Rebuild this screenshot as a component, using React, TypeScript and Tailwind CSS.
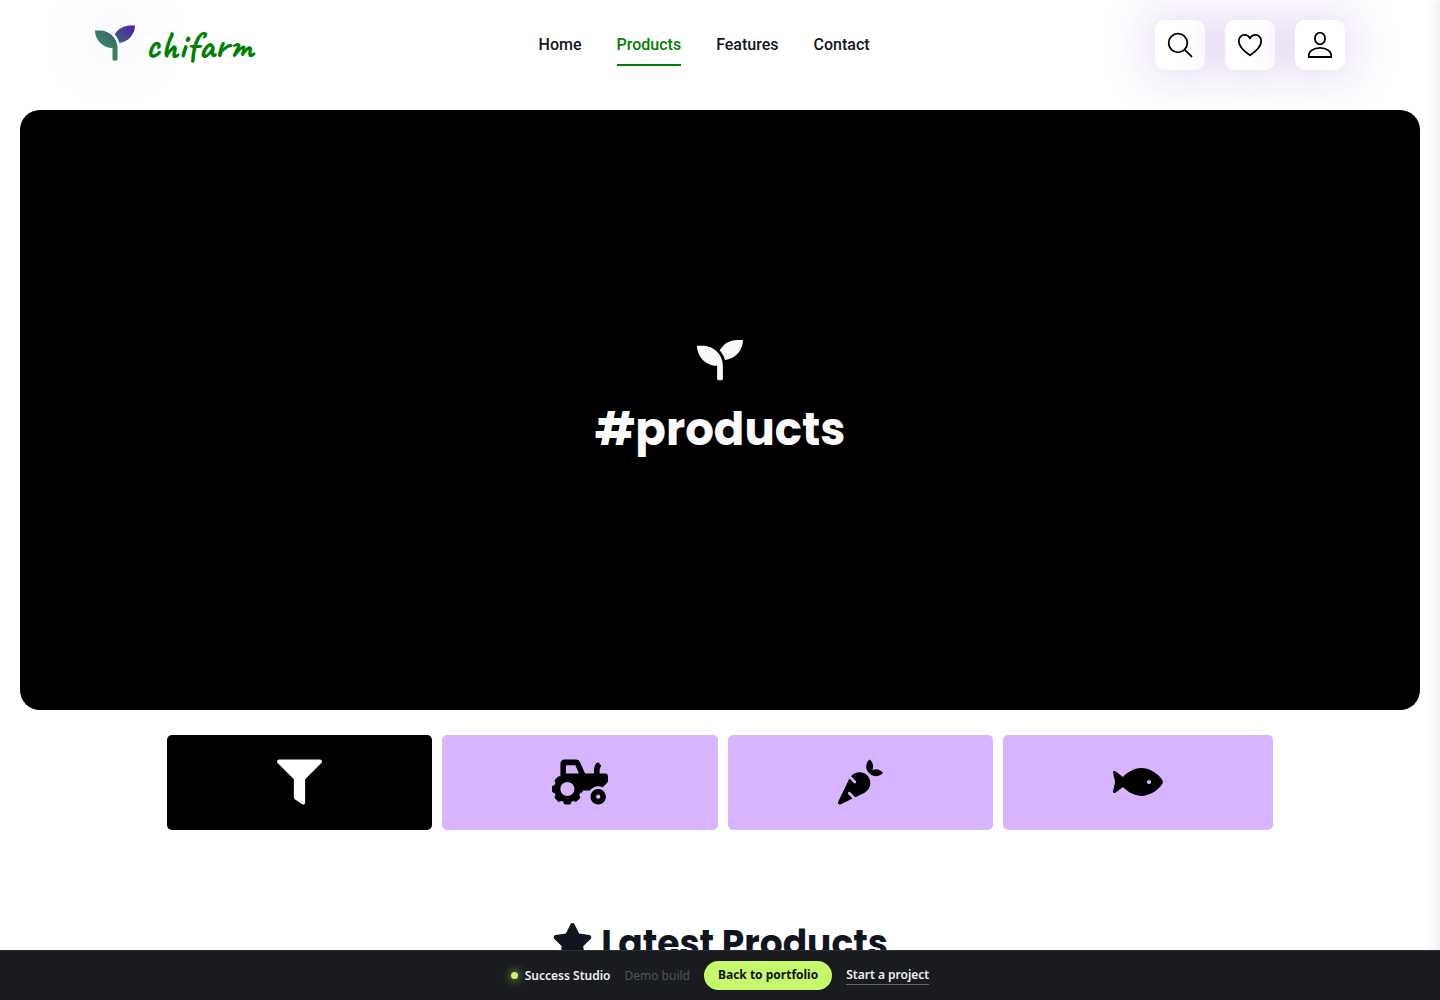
import { FaCarrot, FaFilter, FaFish, FaSeedling, FaStar, FaTractor } from "react-icons/fa";

const navLinks = ["Home", "Products", "Features", "Contact"];

const filters = [
  { label: "All products", icon: FaFilter, size: "w-[45px]", style: "bg-black text-white" },
  { label: "Machinery", icon: FaTractor, size: "w-[56px]", style: "bg-[#d6b4ff] text-black" },
  { label: "Vegetables", icon: FaCarrot, size: "w-[45px]", style: "bg-[#d6b4ff] text-black" },
  { label: "Fish", icon: FaFish, size: "w-[50px]", style: "bg-[#d6b4ff] text-black" },
];

const actions = [
  {
    label: "Search",
    icon: (
      <>
        <circle cx="11" cy="11" r="9.3" />
        <path d="M17.8 17.8 L24.5 24.3" />
      </>
    ),
  },
  {
    label: "Wishlist",
    icon: (
      <path d="M13 23.3 C10 21.300 1.800 15.500 1.800 9 C1.800 5.300 4.400 2.800 7.400 2.800 C9.900 2.800 12 4.300 13 6.400 C14 4.300 16.100 2.800 18.600 2.800 C21.600 2.800 24.200 5.300 24.200 9 C24.200 15.500 16 21.300 13 23.300 Z" />
    ),
  },
  {
    label: "Account",
    icon: (
      <>
        <ellipse cx="13" cy="6.5" rx="5.100" ry="5.800" />
        <path d="M1.800 25 C1 19.500 6.500 15.800 13 15.800 C19.500 15.800 25 19.500 24.200 25 Z" />
      </>
    ),
  },
];

const Header = () => {
  return (
    <header className="flex h-[90px] items-center justify-between px-[95px]">
      <a href="#home" className="flex items-center gap-[10px] pb-1 text-[#008000]">
        <svg
          viewBox="0 0 512 512"
          className="h-10 w-10 drop-shadow-[0_0_30px_rgba(80,40,240,0.2)]"
          aria-hidden="true"
        >
          <defs>
            <linearGradient id="leaf" x1="0" y1="1" x2="1" y2="0">
              <stop offset="0.4" stopColor="#368060" />
              <stop offset="1" stopColor="#5a12b8" />
            </linearGradient>
          </defs>
          <path
            fill="url(#leaf)"
            d="M64 96H0c0 123.700 100.300 224 224 224v144c0 8.800 7.200 16 16 16h32c8.800 0 16-7.200 16-16V320C288 196.300 187.700 96 64 96zm384-64c-84.200 0-157.400 46.500-195.700 115.200 27.700 30.200 48.200 66.900 59 107.600C424 243.100 512 147.900 512 32h-64z"
          />
        </svg>
        <span className="pt-1 text-[40px] leading-10 font-bold font-[Caveat,cursive]">chifarm</span>
      </a>
      <nav className="flex gap-[35px]">
        {navLinks.map((link) => (
          <a
            key={link}
            href={`#${link.toLowerCase()}`}
            className={`border-b-2 pt-2 pb-1.5 leading-[26px] font-medium ${
              link === "Products"
                ? "border-[#008000] text-[#008000]"
                : "border-transparent text-[#10151f]"
            }`}
          >
            {link}
          </a>
        ))}
      </nav>
      <div className="flex gap-5">
        {actions.map(({ label, icon }) => (
          <button
            key={label}
            type="button"
            aria-label={label}
            className="flex h-[50px] w-[50px] items-center justify-center rounded-[10px] bg-white shadow-[0_0_50px_rgba(90,20,180,0.25)]"
          >
            <svg
              viewBox="0 0 26 26"
              className="h-[26px] w-[26px]"
              fill="none"
              stroke="#000"
              strokeWidth="1.8"
              strokeLinejoin="round"
              strokeLinecap="round"
            >
              {icon}
            </svg>
          </button>
        ))}
      </div>
    </header>
  );
};

const StudioBar = () => {
  return (
    <footer className="fixed inset-x-0 bottom-0 flex h-[50px] items-center justify-center gap-[14px] border-t border-[#2e2f34] bg-[#1a1b1f] text-xs leading-5 font-['Segoe_UI','Noto_Sans',sans-serif]">
      <p className="flex items-center gap-[7px] font-semibold text-[#f0f0f2]">
        <span className="h-[7px] w-[7px] rounded-full bg-[#c5f96b] shadow-[0_0_10px_#c5f96b]" />
        Success Studio
      </p>
      <span className="text-[#50535b]">Demo build</span>
      <a
        href="#portfolio"
        className="rounded-full bg-[#c5f96b] px-[14px] pt-1 pb-[5px] font-bold text-[#101216]"
      >
        Back to portfolio
      </a>
      <a href="#project" className="border-b border-[#66686e] leading-[18px] font-semibold text-[#f0f0f2]">
        Start a project
      </a>
    </footer>
  );
};

const App = () => {
  return (
    <div className="min-h-screen bg-white font-[Roboto,sans-serif]">
      <Header />
      <main>
        <section className="mx-5 mt-5 flex h-[600px] flex-col items-center justify-center gap-[13px] rounded-[20px] bg-black pb-5 text-[#fafafa]">
          <FaSeedling className="text-[46px]" />
          <h1 className="text-[45px] leading-[68px] font-bold font-[Poppins,sans-serif]">
            #products
          </h1>
        </section>
        <div className="mt-[25px] flex justify-center gap-[10px]">
          {filters.map(({ label, icon: Icon, size, style }) => (
            <button
              key={label}
              type="button"
              aria-label={label}
              className={`rounded-[5px] px-[110px] pt-6 pb-[25px] ${style}`}
            >
              <Icon className={`h-[46px] ${size}`} />
            </button>
          ))}
        </div>
        <h2 className="mt-[90px] flex items-center justify-center gap-2 text-4xl leading-[48px] font-bold text-[#10151f] font-[Poppins,sans-serif]">
          <FaStar className="mb-1.5 h-9 w-[41px]" />
          Latest Products
        </h2>
      </main>
      {/* closed side drawer, only its shadow reaches into the page */}
      <div className="fixed inset-y-0 left-full w-80 bg-white shadow-[0_0_15px_rgba(0,0,0,0.12)]" />
      <StudioBar />
    </div>
  );
};

export default App;
